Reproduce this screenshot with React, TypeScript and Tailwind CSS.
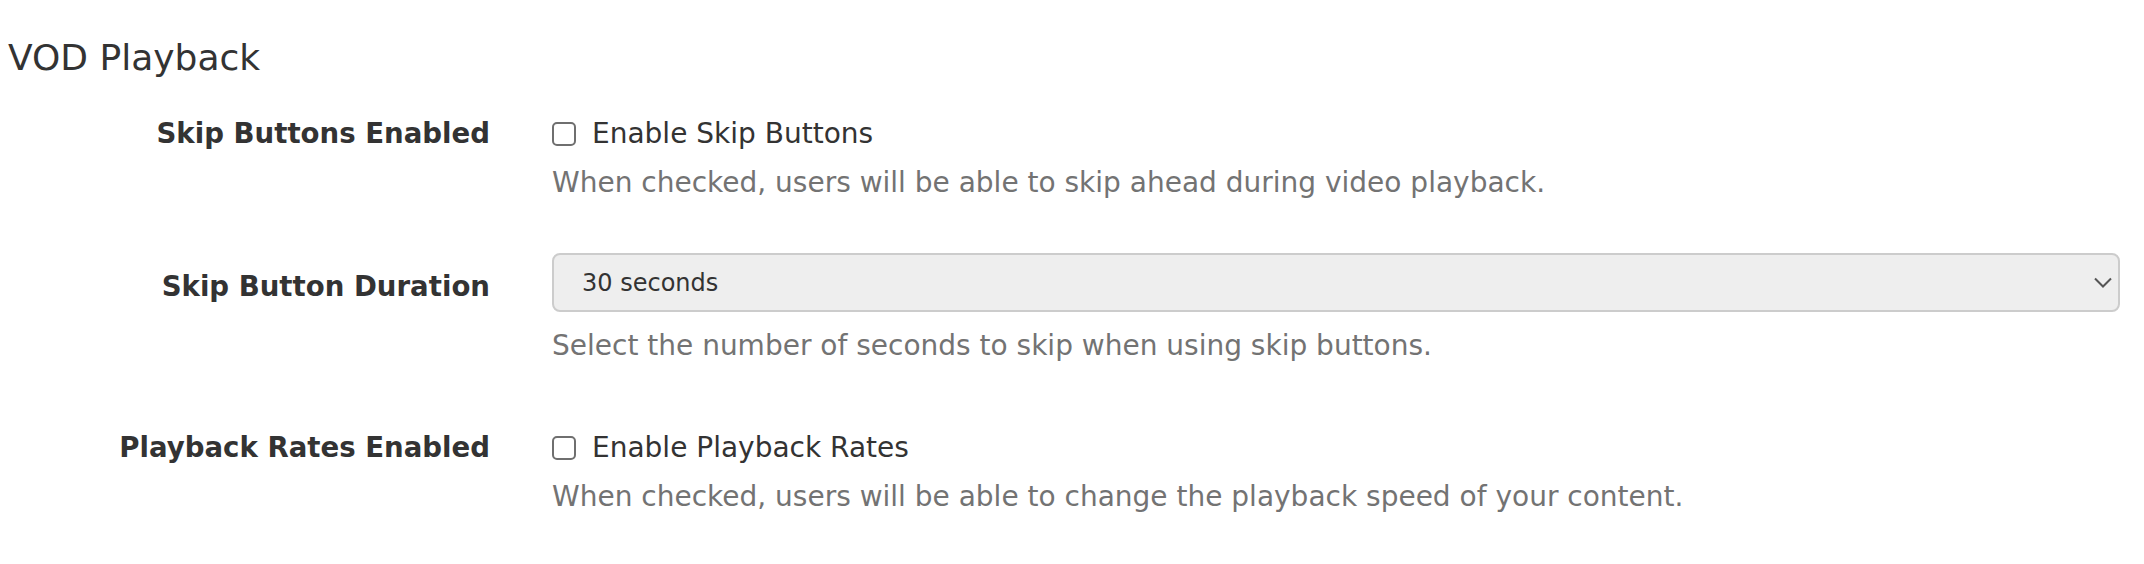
import { useState } from 'react';

const FONT = "font-['DejaVu_Sans',Verdana,sans-serif]";

interface CheckRowProps {
  label: string;
  text: string;
  help: string;
  className?: string;
}

function CheckRow({ label, text, help, className = '' }: CheckRowProps) {
  const [checked, setChecked] = useState(false);

  return (
    <div className={`grid grid-cols-[482px_1fr] gap-x-[62px] ${className}`}>
      <div className="text-right text-[27.6px] leading-[40px] font-bold text-[#333333]">{label}</div>
      <div>
        <label className="flex items-center h-[40px] text-[28px] text-[#333333] cursor-pointer">
          <input
            type="checkbox"
            checked={checked}
            onChange={() => setChecked(!checked)}
            className="sr-only"
          />
          {/* drawn box, the native one renders too small */}
          <span className="block w-[24px] h-[24px] min-w-[24px] border-2 border-[#6f6f6f] rounded-[5px] bg-white mr-[16px]">
            {checked && (
              <svg viewBox="0 0 20 20" width="20" height="20">
                <path d="M4 10 L8 14 L16 5" stroke="#333333" strokeWidth="2.5" fill="none" />
              </svg>
            )}
          </span>
          {text}
        </label>
        <p className="mt-[9px] text-[28px] leading-[40px] text-[#737373]">{help}</p>
      </div>
    </div>
  );
}

export default function App() {
  const [duration, setDuration] = useState('30');

  return (
    <div className={`${FONT} bg-white min-h-[564px] pl-[8px] pr-[24px] pt-[36px]`}>
      <h2 className="text-[36px] leading-[43px] text-[#333333]">VOD Playback</h2>

      <CheckRow
        className="mt-[35px]"
        label="Skip Buttons Enabled"
        text="Enable Skip Buttons"
        help="When checked, users will be able to skip ahead during video playback."
      />

      {/* Duration select */}
      <div className="grid grid-cols-[482px_1fr] gap-x-[62px] mt-[50px]">
        <div className="text-right text-[27.6px] leading-[40px] font-bold text-[#333333] mt-[14px]">
          Skip Button Duration
        </div>
        <div>
          <div className="relative">
            <select
              value={duration}
              onChange={(e) => setDuration(e.target.value)}
              className={`${FONT} appearance-none w-full h-[59px] pl-[28px] pr-[60px] text-[24px] text-[#333333] bg-[#eeeeee] border-2 border-[#cccccc] rounded-[8px] outline-none`}
            >
              <option value="10">10 seconds</option>
              <option value="15">15 seconds</option>
              <option value="30">30 seconds</option>
              <option value="60">60 seconds</option>
            </select>
            <svg
              className="absolute right-[8px] top-[24px] pointer-events-none"
              width="18"
              height="11"
              viewBox="0 0 18 11"
              fill="none"
            >
              <path d="M1 1.5 L9 9.5 L17 1.5" stroke="#555555" strokeWidth="2" />
            </svg>
          </div>
          <p className="mt-[14px] text-[28px] leading-[40px] text-[#737373]">
            Select the number of seconds to skip when using skip buttons.
          </p>
        </div>
      </div>

      <CheckRow
        className="mt-[62px]"
        label="Playback Rates Enabled"
        text="Enable Playback Rates"
        help="When checked, users will be able to change the playback speed of your content."
      />
    </div>
  );
}
